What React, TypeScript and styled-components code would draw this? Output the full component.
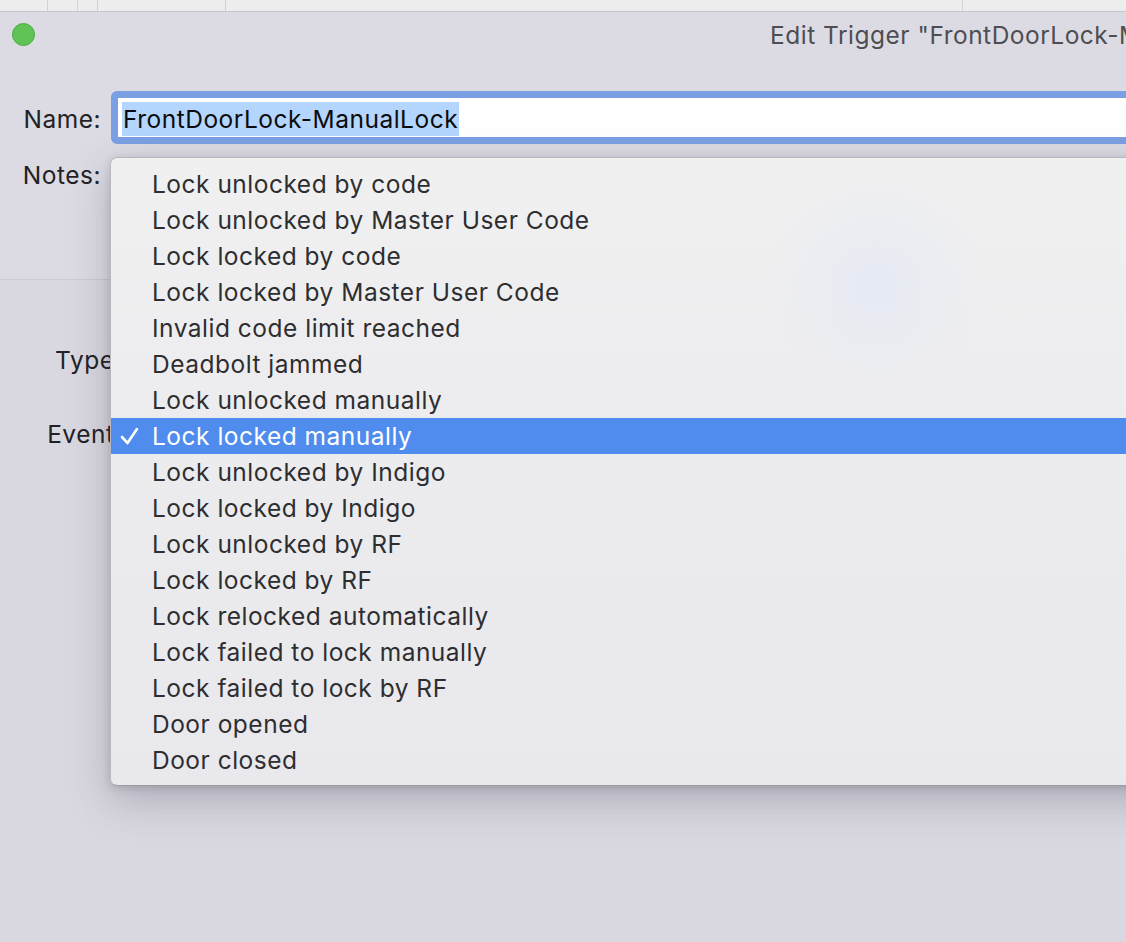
import React from "react";
import styled, { createGlobalStyle } from "styled-components";

const GlobalStyle = createGlobalStyle`
  html, body {
    margin: 0;
    padding: 0;
    overflow: hidden;
    background: #d5d3dd;
  }
  body {
    font-family: Inter, "Noto Sans", "Liberation Sans", sans-serif;
  }
`;

const Screen = styled.div`
  position: relative;
  width: 1126px;
  height: 942px;
  overflow: hidden;
  display: flex;
  flex-direction: column;
`;

const BackStrip = styled.div`
  height: 11px;
  flex: none;
  display: flex;
  background: #ededed;
  border-bottom: 1px solid #c6c6c8;
`;

const StripCell = styled.div<{ $w: number }>`
  width: ${(p) => p.$w}px;
  flex: none;
  border-right: 1px solid #d2d2d2;
`;

const Window = styled.div`
  flex: 1;
  display: flex;
  flex-direction: column;
  background: #dcdbe3;
`;

const TitleBar = styled.div`
  height: 45px;
  display: flex;
  align-items: center;
  flex: none;
  overflow: hidden;
`;

const TrafficLight = styled.div`
  width: 23px;
  height: 23px;
  flex: none;
  border-radius: 50%;
  background: #5fc454;
  border: 1px solid #4ea945;
  box-sizing: border-box;
  margin-left: 12px;
`;

const Title = styled.div`
  margin-left: 735px;
  flex: none;
  white-space: nowrap;
  font-size: 24.5px;
  letter-spacing: 0.5px;
  color: #4e4e52;
`;

const TopForm = styled.div`
  padding-top: 34px;
  display: flex;
  flex-direction: column;
  gap: 13px;
  height: 223px;
  box-sizing: border-box;
  flex: none;
  border-bottom: 1px solid #cbcad1;
  background: #dcdbe3;
`;

const Row = styled.div`
  display: flex;
  align-items: center;
`;

const NameRow = styled(Row)`
  align-items: baseline;
`;

const Label = styled.div<{ $w: number }>`
  width: ${(p) => p.$w}px;
  flex: none;
  text-align: right;
  font-size: 24.5px;
  letter-spacing: 0.5px;
  color: #222226;
  white-space: nowrap;
  box-sizing: border-box;
`;

const FocusRing = styled.div`
  margin-left: 10px;
  flex: 1;
  margin-right: -40px;
  height: 53px;
  box-sizing: border-box;
  border: 7px solid #7b9fe3;
  border-radius: 6px;
  background: #ffffff;
  display: flex;
  align-items: flex-end;
  padding: 0 0 1px 4px;
`;

const Selection = styled.span`
  background: #b4d5fe;
  color: #0c0c0c;
  font-size: 24.5px;
  letter-spacing: 0.5px;
  line-height: 34px;
  padding: 0 1px;
`;

const NotesRow = styled(Row)`
  align-items: flex-start;
  height: 40px;
  padding-top: 3px;
`;

const LowerForm = styled.div`
  flex: 1;
  display: flex;
  flex-direction: column;
  padding-top: 65px;
  gap: 44px;
  background: #d9d8e0;
`;

const LowerRow = styled(Row)`
  height: 30px;
`;

const Menu = styled.div`
  position: absolute;
  left: 110px;
  top: 157px;
  width: 1100px;
  height: 629px;
  box-sizing: border-box;
  padding: 8px 0 8px;
  border-radius: 7px;
  background:
    radial-gradient(circle at 765px 128px, rgba(226, 232, 246, 0.75) 0, rgba(229, 233, 244, 0.4) 50px, rgba(236, 236, 239, 0) 110px),
    linear-gradient(180deg, #f0f0f1 0%, #ebebee 60%, #e9e8ec 100%);
  border: 1px solid #b9b8bf;
  border-bottom-color: #9c9ba2;
  box-shadow: 0 14px 40px rgba(60, 56, 80, 0.28), 0 2px 8px rgba(60, 56, 80, 0.18);
  display: flex;
  flex-direction: column;
`;

const Item = styled.div<{ $selected?: boolean }>`
  height: 36px;
  flex: none;
  display: flex;
  align-items: center;
  position: relative;
  padding-left: 41px;
  font-size: 24.5px;
  letter-spacing: 0.5px;
  color: ${(p) => (p.$selected ? "#ffffff" : "#2e2e31")};
  background: ${(p) => (p.$selected ? "#4f8ced" : "transparent")};
  white-space: nowrap;
`;

const Check = styled.svg`
  position: absolute;
  left: 9px;
  top: 9px;
`;

const items = [
  "Lock unlocked by code",
  "Lock unlocked by Master User Code",
  "Lock locked by code",
  "Lock locked by Master User Code",
  "Invalid code limit reached",
  "Deadbolt jammed",
  "Lock unlocked manually",
  "Lock locked manually",
  "Lock unlocked by Indigo",
  "Lock locked by Indigo",
  "Lock unlocked by RF",
  "Lock locked by RF",
  "Lock relocked automatically",
  "Lock failed to lock manually",
  "Lock failed to lock by RF",
  "Door opened",
  "Door closed",
];

const stripCells = [47, 29, 19, 127, 736];

export default function App() {
  return (
    <>
      <GlobalStyle />
      <Screen>
        <BackStrip>
          {stripCells.map((w, i) => (
            <StripCell key={i} $w={w} />
          ))}
        </BackStrip>
        <Window>
          <TitleBar>
            <TrafficLight />
            <Title>Edit Trigger "FrontDoorLock-ManualLock"</Title>
          </TitleBar>
          <TopForm>
            <NameRow>
              <Label $w={101}>Name:</Label>
              <FocusRing>
                <Selection>FrontDoorLock-ManualLock</Selection>
              </FocusRing>
            </NameRow>
            <NotesRow>
              <Label $w={101}>Notes:</Label>
            </NotesRow>
          </TopForm>
          <LowerForm>
            <LowerRow>
              <Label $w={122}>Type:</Label>
            </LowerRow>
            <LowerRow>
              <Label $w={122}>Event:</Label>
            </LowerRow>
          </LowerForm>
        </Window>
        <Menu>
          {items.map((t) => {
            const sel = t === "Lock locked manually";
            return (
              <Item key={t} $selected={sel}>
                {sel && (
                  <Check width="20" height="18" viewBox="0 0 20 18">
                    <path d="M2 10 L7.5 16 L17 2" fill="none" stroke="#ffffff" strokeWidth="2.6" strokeLinecap="round" strokeLinejoin="round" />
                  </Check>
                )}
                {t}
              </Item>
            );
          })}
        </Menu>
      </Screen>
    </>
  );
}
